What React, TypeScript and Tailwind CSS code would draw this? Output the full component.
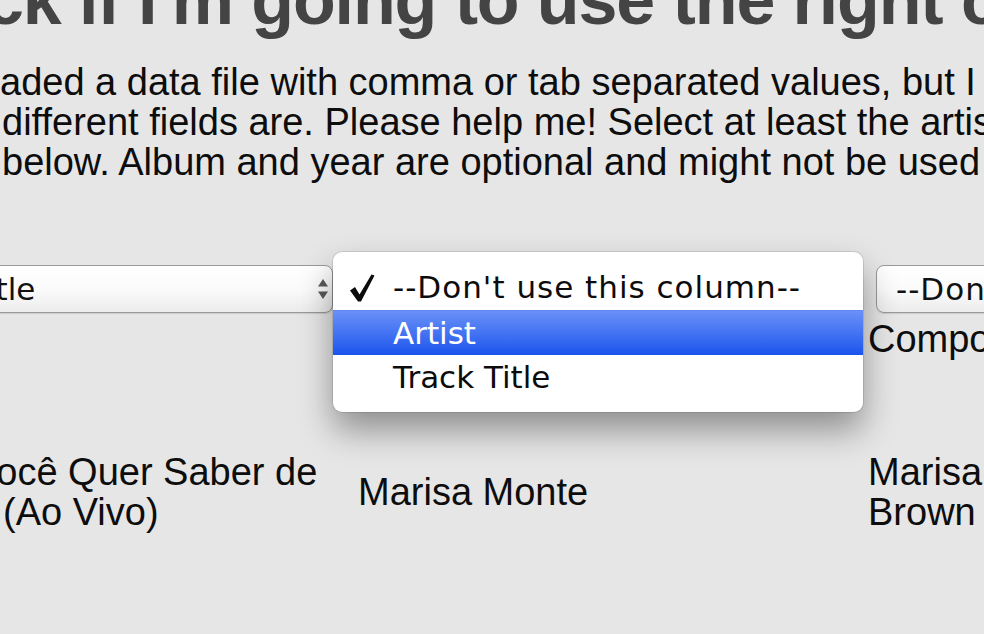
import React from 'react';

/**
 * Column mapping screen, zoomed in: heading, help text,
 * a row of column selects (one open) and the first data row.
 */

function UpDownArrows() {
  return (
    <svg width="12" height="22" viewBox="0 0 12 22" className="shrink-0">
      <path d="M6 1 L11 8.5 H1 Z" fill="#5a5a5a" />
      <path d="M6 21 L11 13.5 H1 Z" fill="#5a5a5a" />
    </svg>
  );
}

function CheckMark() {
  return (
    <svg width="26" height="30" viewBox="0 0 26 30">
      <path d="M1 17.5 L6 14 L10.5 21.5 L22.5 1.5 L25.5 2.5 L12 28.5 L9 28.5 Z" fill="#0c0c0c" />
    </svg>
  );
}

function MacSelect({ label, className }: { label: string; className: string }) {
  return (
    <div
      className={`flex h-[48px] items-center justify-between rounded-[8px] border border-[#9a9a9a] bg-linear-to-b from-white via-[#fbfbfb] to-[#ececec] pl-[14px] pr-[3px] font-['DejaVu_Sans',sans-serif] text-[31px] text-[#111] shadow-[0_1px_1px_rgba(0,0,0,0.12)] ${className}`}
    >
      <span className="whitespace-nowrap">{label}</span>
      <UpDownArrows />
    </div>
  );
}

function OpenMenu() {
  return (
    <div className="absolute left-[-12px] top-[-13px] z-10 w-[530px] rounded-[9px] bg-white py-[12px] font-['DejaVu_Sans',sans-serif] text-[31px] text-[#0c0c0c] shadow-[0_18px_34px_rgba(0,0,0,0.38),0_0_0_1px_rgba(0,0,0,0.1)]">
      <div className="relative flex h-[46px] items-center pl-[60px]">
        <span className="absolute left-[16px] top-[9px]">
          <CheckMark />
        </span>
        <span className="tracking-[1px]">--Don't use this column--</span>
      </div>
      <div className="flex h-[45px] items-center border-t border-[#5f8af6] bg-linear-to-b from-[#6a90f8] to-[#1a53ec] pl-[60px] text-white">
        Artist
      </div>
      <div className="flex h-[45px] items-center pl-[60px]">Track Title</div>
    </div>
  );
}

export default function App() {
  return (
    <div className="h-[634px] w-[984px] overflow-hidden bg-[#e6e6e6] font-['Liberation_Sans',Arial,sans-serif] text-[#0d0d0d]">
      {/* Heading, cut at the top */}
      <h1 className="-ml-[15px] -mt-[35px] whitespace-nowrap text-[70px] font-bold leading-[70px] tracking-[-1.1px] text-[#444]">
        ck if I'm going to use the right c
      </h1>

      {/* Help text */}
      <div className="mt-[27px] whitespace-nowrap text-[38px] leading-[40px]">
        <div>aded a data file with comma or tab separated values, but I</div>
        <div className="ml-[2px]">different fields are. Please help me! Select at least the artist</div>
        <div className="ml-[2px]">below. Album and year are optional and might not be used</div>
      </div>

      {/* Column selects */}
      <div className="mt-[83px] flex">
        <div className="w-[345px] shrink-0">
          <MacSelect label="Track Title" className="-ml-[137px] w-[470px]" />
        </div>
        <div className="relative w-[523px] shrink-0">
          <MacSelect label="--Don't use this column--" className="w-[517px]" />
          <OpenMenu />
        </div>
        <div className="shrink-0">
          <MacSelect label="--Don't use this column--" className="ml-[8px] w-[480px] pl-[19px] tracking-[1px]" />
        </div>
      </div>

      {/* Original column names */}
      <div className="mt-[6px] flex h-[40px] text-[38px] leading-[40px]">
        <div className="w-[345px] shrink-0" />
        <div className="w-[523px] shrink-0" />
        <div className="whitespace-nowrap">Composer</div>
      </div>

      {/* First data row */}
      <div className="mt-[93px] flex items-center text-[38px] leading-[40px]">
        <div className="w-[345px] shrink-0 whitespace-nowrap">
          <div className="-ml-[27px]">Você Quer Saber de</div>
          <div className="ml-[3px]">(Ao Vivo)</div>
        </div>
        <div className="w-[523px] shrink-0 whitespace-nowrap pl-[13px]">Marisa Monte</div>
        <div className="whitespace-nowrap">
          <div>Marisa</div>
          <div>Brown</div>
        </div>
      </div>
    </div>
  );
}
